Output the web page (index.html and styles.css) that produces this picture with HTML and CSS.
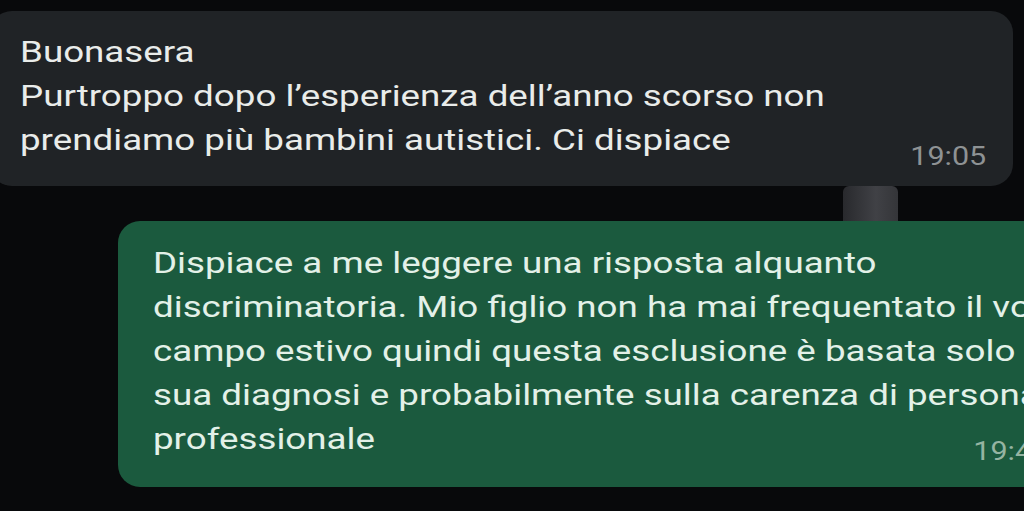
FILE: index.html
```html
<!DOCTYPE html>
<html lang="it">
<head>
  <meta charset="UTF-8" />
  <meta name="viewport" content="width=device-width, initial-scale=1.0" />
  <title>Chat</title>
  <link rel="stylesheet" href="styles.css">
</head>
<body>
  <div class="chat">
    <!-- incoming -->
    <div class="bubble incoming">
      <p class="text">Buonasera<br>Purtroppo dopo l’esperienza dell’anno scorso non<br>prendiamo più bambini autistici. Ci dispiace</p>
      <span class="time">19:05</span>
    </div>

    <div class="gap">
      <div class="blob"></div>
    </div>

    <!-- outgoing -->
    <div class="bubble outgoing">
      <p class="text">Dispiace a me leggere una risposta alquanto<br>discriminatoria. Mio figlio non ha mai frequentato il vostro<br>campo estivo quindi questa esclusione è basata solo sulla<br>sua diagnosi e probabilmente sulla carenza di personale<br>professionale</p>
      <span class="time">19:45</span>
    </div>
  </div>
</body>
</html>
```

FILE: styles.css
```css
* {
  margin: 0;
  padding: 0;
  box-sizing: border-box;
}
html, body {
  height: 100%;
  overflow: hidden;
}
body {
  background: #08090b;
  font-family: Roboto, 'Noto Sans', sans-serif;
  color: #e9ecea;
}
.chat {
  padding-top: 11px;
}
.bubble {
  display: flex;
  align-items: flex-end;
  justify-content: space-between;
  border-radius: 22px;
}
/* the screenshot is stretched sideways, so widen the glyphs */
.text {
  font-size: 29.5px;
  line-height: 44px;
  white-space: nowrap;
  transform: scaleX(1.245);
  transform-origin: left center;
}
.time {
  font-size: 25px;
  line-height: 30px;
  color: #8e9294;
  transform: scaleX(1.22);
  transform-origin: right center;
}
.incoming {
  width: 1023px;
  margin-left: -10px;
  background: #202326;
  padding: 19px 27px 14px 30px;
}
.incoming .text {
  margin-bottom: 10px;
}
.outgoing {
  width: 959px;
  margin-left: 118px;
  background: #1b5a3e;
  padding: 20px 28px 20px 35px;
  color: #e3f1e8;
}
.outgoing .text {
  margin-bottom: 6px;
}
.outgoing .time {
  color: #95b4a2;
}
.gap {
  height: 35px;
  padding-left: 843px;
}
.blob {
  width: 55px;
  height: 35px;
  background: linear-gradient(90deg, #2e2f33, #4a4b50 60%, #3c3d41);
  border-radius: 6px 6px 0 0;
  opacity: 0.85;
}
```
